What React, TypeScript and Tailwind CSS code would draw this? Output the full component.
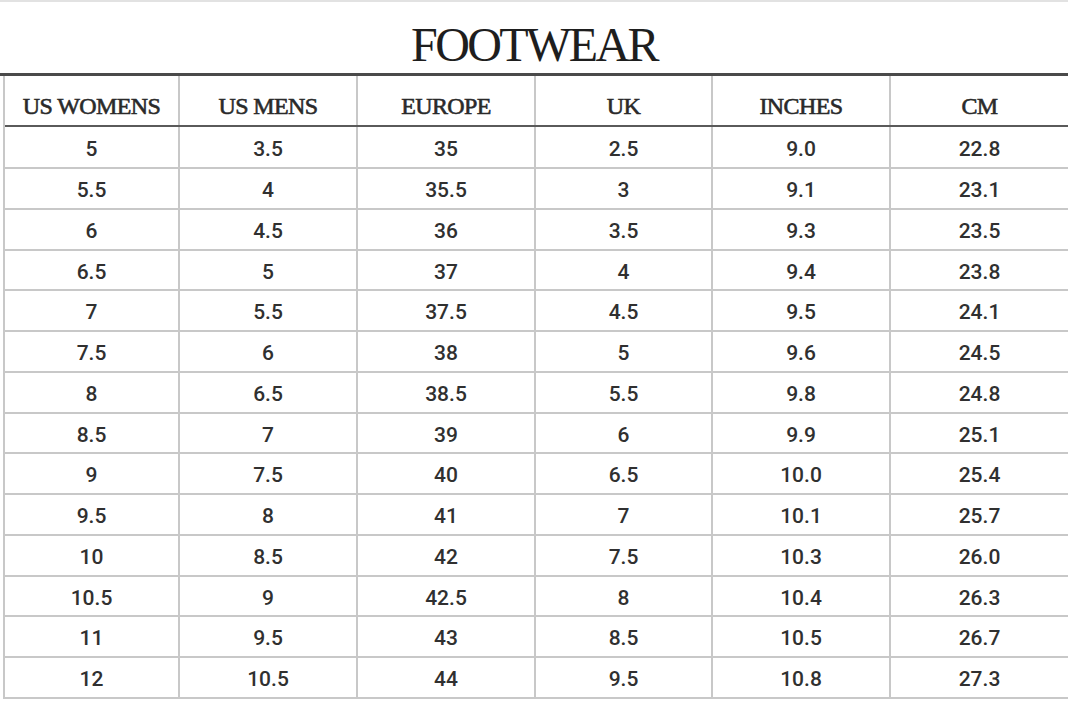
import React from "react";

const headers = ["US WOMENS", "US MENS", "EUROPE", "UK", "INCHES", "CM"];
const rows: string[][] = [
  ["5", "3.5", "35", "2.5", "9.0", "22.8"],
  ["5.5", "4", "35.5", "3", "9.1", "23.1"],
  ["6", "4.5", "36", "3.5", "9.3", "23.5"],
  ["6.5", "5", "37", "4", "9.4", "23.8"],
  ["7", "5.5", "37.5", "4.5", "9.5", "24.1"],
  ["7.5", "6", "38", "5", "9.6", "24.5"],
  ["8", "6.5", "38.5", "5.5", "9.8", "24.8"],
  ["8.5", "7", "39", "6", "9.9", "25.1"],
  ["9", "7.5", "40", "6.5", "10.0", "25.4"],
  ["9.5", "8", "41", "7", "10.1", "25.7"],
  ["10", "8.5", "42", "7.5", "10.3", "26.0"],
  ["10.5", "9", "42.5", "8", "10.4", "26.3"],
  ["11", "9.5", "43", "8.5", "10.5", "26.7"],
  ["12", "10.5", "44", "9.5", "10.8", "27.3"],
];

const grid = "grid grid-cols-[175px_178px_178px_177px_178px_1fr]";

export default function App() {
  return (
    <div className="w-[1068px] h-[704px] overflow-hidden bg-white">
      <div className="h-[2px] bg-[#e2e2e2]" />
      <div
        className="h-[71px] flex items-start justify-center pt-[19px] text-[48px] leading-none tracking-[-2.6px] text-[#1e1e1e]"
        style={{ fontFamily: '"Liberation Serif", serif' }}
      >
        FOOTWEAR
      </div>
      <div className="h-[3px] bg-[#4a4a4a]" />
      <div className="ml-[3px] border-l-2 border-[#c8c8c8]">
        <div
          className={`${grid} h-[51px] border-b-2 border-[#5a5a5a]`}
          style={{ fontFamily: '"Liberation Serif", serif' }}
        >
          {headers.map((h, i) => (
            <div
              key={h}
              className={`flex items-center justify-center pt-[10px] text-[24px] font-normal tracking-[-0.6px] text-[#2a2a2a] [-webkit-text-stroke:0.6px_#2a2a2a] ${
                i < 5 ? "border-r-2 border-[#c8c8c8]" : ""
              }`}
            >
              {h}
            </div>
          ))}
        </div>
        {rows.map((r, ri) => (
          <div
            key={ri}
            className={`${grid} ${ri === 0 ? "h-[42px]" : "h-[40.75px]"} border-b-2 border-[#c8c8c8]`}
            style={{ fontFamily: "Roboto, sans-serif" }}
          >
            {r.map((c, i) => (
              <div
                key={i}
                className={`flex items-center justify-center pt-[5px] text-[21px] font-medium text-[#303030] ${
                  i < 5 ? "border-r-2 border-[#c8c8c8]" : ""
                }`}
              >
                {c}
              </div>
            ))}
          </div>
        ))}
      </div>
    </div>
  );
}
